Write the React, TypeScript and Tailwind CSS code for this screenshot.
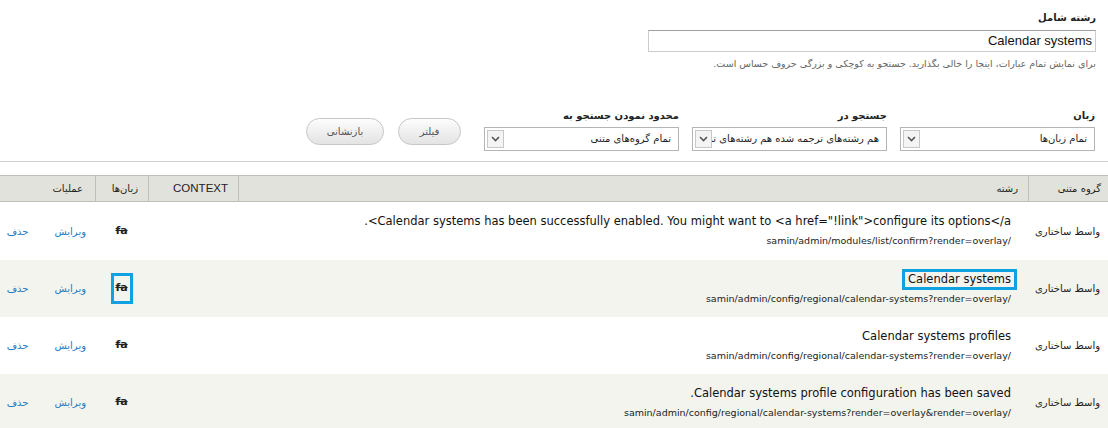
import React from "react";

const fa = '"DejaVu Sans", "Noto Sans", sans-serif';

function Chevron() {
  return (
    <svg width="9" height="6" viewBox="0 0 9 6">
      <path d="M1 1 L4.5 4.5 L8 1" fill="none" stroke="#555" strokeWidth="1.6" />
    </svg>
  );
}

function Select({ text }: { text: string }) {
  return (
    <div className="mt-[3px] flex h-[24px] w-[195px] items-stretch border border-[#b4b4b4] bg-white p-[2px]">
      <div className="min-w-0 flex-1 overflow-hidden whitespace-nowrap pr-[5px] text-[10px] leading-[18px] text-[#222]">
        {text}
      </div>
      <div className="flex w-[17px] shrink-0 items-center justify-center border border-[#c8c8c8] bg-[#f4f4f4]">
        <Chevron />
      </div>
    </div>
  );
}

function Filter({ label, text }: { label: string; text: string }) {
  return (
    <div className="flex w-[195px] flex-col">
      <div className="text-[10px] font-bold leading-[16px] text-[#222]">{label}</div>
      <Select text={text} />
    </div>
  );
}

function Button({ label, w }: { label: string; w: string }) {
  return (
    <div
      className={`mt-[10px] flex h-[27px] ${w} items-center justify-center rounded-full border border-[#c6c6c6] bg-gradient-to-b from-[#fdfdfd] to-[#e3e3e3] text-[10px] text-[#555]`}
    >
      {label}
    </div>
  );
}

type Row = { main: string; path: string; hl?: boolean };

const rows: Row[] = [
  {
    main: 'Calendar systems has been successfully enabled. You might want to <a href="!link">configure its options</a>.',
    path: "/samin/admin/modules/list/confirm?render=overlay",
  },
  {
    main: "Calendar systems",
    path: "/samin/admin/config/regional/calendar-systems?render=overlay",
    hl: true,
  },
  {
    main: "Calendar systems profiles",
    path: "/samin/admin/config/regional/calendar-systems?render=overlay",
  },
  {
    main: "Calendar systems profile configuration has been saved.",
    path: "/samin/admin/config/regional/calendar-systems?render=overlay&render=overlay",
  },
];

export default function App() {
  return (
    <div
      dir="rtl"
      className="h-[428px] w-[1108px] overflow-hidden bg-white text-[#222]"
      style={{ fontFamily: fa }}
    >
      <div className="pr-[12px] pt-[10px]">
        <div className="text-[10px] font-bold leading-[16px]">رشته شامل</div>
        <div
          className="mt-[4px] flex h-[22px] w-[448px] items-center border border-[#cccccc] border-t-[#a0a0a0] pr-[3px] text-[13px] text-[#111]"
          style={{ fontFamily: '"Liberation Sans", Arial, sans-serif' }}
        >
          Calendar systems
        </div>
        <div className="mt-[4px] text-[9.5px] leading-[16px] text-[#666]">
          برای نمایش تمام عبارات، اینجا را خالی بگذارید. جستجو به کوچکی و بزرگی حروف حساس است.
        </div>
      </div>

      <div className="mt-[36px] flex items-start gap-[13px] pr-[13px]">
        <Filter label="زبان" text="تمام زبان‌ها" />
        <Filter label="جستجو در" text="هم رشته‌های ترجمه شده هم رشته‌های ترجمه نشده" />
        <Filter label="محدود نمودن جستجو به" text="تمام گروه‌های متنی" />
        <div className="mr-[10px] flex gap-[14px]">
          <Button label="فیلتر" w="w-[63px]" />
          <Button label="بازنشانی" w="w-[78px]" />
        </div>
      </div>

      <div className="mt-[10px] h-px w-full bg-[#d0d0d0]" />

      <div className="mt-[13px]">
        <div className="grid h-[27px] grid-cols-[80px_790px_90px_53px_95px] border-y border-[#bebfb9] bg-[#e1e2dc] text-[10px] text-[#222]">
          <div className="flex items-center border-l border-[#bebfb9] pr-[7px]">گروه متنی</div>
          <div className="flex items-center border-l border-[#bebfb9] pr-[10px]">رشته</div>
          <div
            className="flex items-center border-l border-[#bebfb9] pr-[10px] text-[11.5px]"
            style={{ fontFamily: '"Liberation Sans", Arial, sans-serif' }}
          >
            CONTEXT
          </div>
          <div className="flex items-center border-l border-[#bebfb9] pr-[10px]">زبان‌ها</div>
          <div className="flex items-center pr-[12px]">عملیات</div>
        </div>

        {rows.map((r, i) => (
          <div
            key={i}
            className={`grid grid-cols-[80px_790px_90px_53px_95px] ${i === 0 ? "h-[58px]" : "h-[57px]"} ${
              i % 2 === 1 ? "bg-[#f3f4ee]" : "bg-white"
            }`}
          >
            <div className="flex items-center pr-[8px] text-[10px]">واسط ساختاری</div>
            <div className="flex flex-col items-start justify-center gap-[4px] pr-[17px]">
              <div className="text-[11.5px] leading-[16px] text-[#111]">
                {r.hl ? (
                  <span className="-mr-[3px] inline-block px-[3px] leading-[15px] outline-3 outline-[#0ea2e0]">
                    {r.main}
                  </span>
                ) : (
                  r.main
                )}
              </div>
              <div className="text-[9.5px] leading-[16px] text-[#222]">{r.path}</div>
            </div>
            <div />
            <div className="flex items-center justify-center">
              <span
                className={`inline-flex h-[25px] w-[16px] items-center justify-center text-[11px] font-bold line-through ${
                  r.hl ? "outline-3 outline-[#0ea2e0]" : ""
                }`}
              >
                fa
              </span>
            </div>
            <div className="flex items-center gap-[26px] pr-[9px] text-[10px] text-[#1f7bc4]">
              <span>ویرایش</span>
              <span>حذف</span>
            </div>
          </div>
        ))}
      </div>
    </div>
  );
}
